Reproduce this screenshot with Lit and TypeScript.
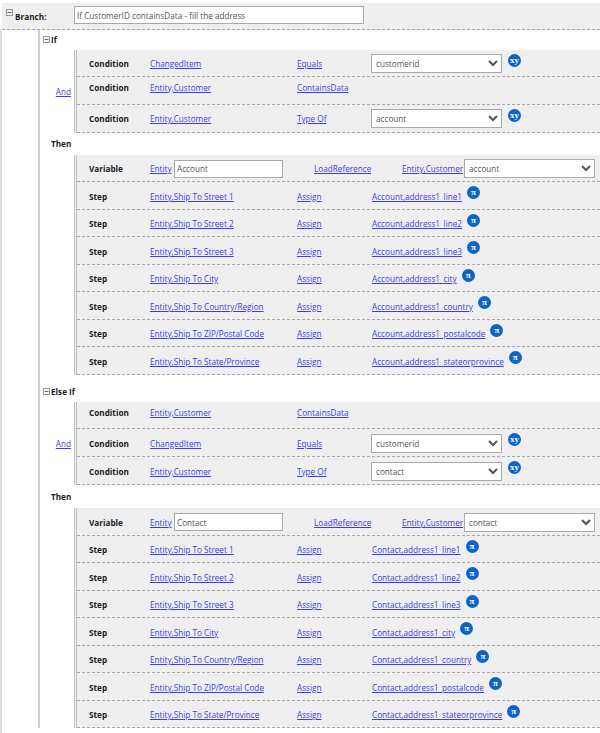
import { LitElement, html, css } from "lit";
import { customElement } from "lit/decorators.js";

type Row = { label: string; a: string; b: string; c?: string; sel?: string; icon?: "xy" | "pi"; h: number };

const steps = (t: string): Row[] => [
  ["Ship To Street 1", "address1_line1"],
  ["Ship To Street 2", "address1_line2"],
  ["Ship To Street 3", "address1_line3"],
  ["Ship To City", "address1_city"],
  ["Ship To Country/Region", "address1_country"],
  ["Ship To ZIP/Postal Code", "address1_postalcode"],
  ["Ship To State/Province", "address1_stateorprovince"],
].map(([a, c]) => ({ label: "Step", a: `Entity,${a}`, b: "Assign", c: `${t},${c}`, icon: "pi" as const, h: 27.5 }));

const cond1 = (h: number): Row => ({ label: "Condition", a: "ChangedItem", b: "Equals", sel: "customerid", icon: "xy", h });
const cond2 = (h: number): Row => ({ label: "Condition", a: "Entity,Customer", b: "ContainsData", h });
const cond3 = (h: number, s: string): Row => ({ label: "Condition", a: "Entity,Customer", b: "Type Of", sel: s, icon: "xy", h });

@customElement("app-root")
export class AppRoot extends LitElement {
  static styles = css`
    :host {
      display: block;
      height: 733px;
      overflow: hidden;
      background: #fff;
      font-family: "Open Sans", "Noto Sans", sans-serif;
      font-size: 8.2px;
      line-height: 13px;
      color: #333;
    }
    a { color: #3b3bf0; text-decoration: underline; white-space: nowrap; }
    b { color: #1c1c1c; font-weight: 700; }
    .branch {
      margin-top: 3px;
      height: 27px;
      box-sizing: border-box;
      margin-left: 2px;
      background: #efefef;
      border-bottom: 1px dashed #a8a8a8;
      display: flex;
      align-items: center;
      padding-left: 4px;
      gap: 2px;
    }
    .branch b { width: 57px; padding-top: 1px; }
    .branch .exp { align-self: flex-start; margin-top: 6px; }
    .exp { flex: none; width: 7px; height: 7px; display: block; }
    .text {
      box-sizing: border-box;
      border: 1px solid #a9a9a9;
      background: #fff;
      padding: 0 2px;
      font: inherit;
      color: #555;
      outline: none;
      height: 18px;
    }
    .branch .text { width: 290px; margin-top: -2px; }
    .rail0 { border-left: 2px solid #dcdcdc; padding-left: 36px; padding-bottom: 40px; }
    .rail1 { border-left: 2px solid #d0d0d0; padding-left: 3px; }
    .head { height: 20px; box-sizing: border-box; padding-bottom: 1px; display: flex; align-items: center; }
    .head .exp { margin-right: 1px; }
    .group { display: flex; align-items: center; }
    .and { width: 31px; text-align: right; padding-right: 3px; box-sizing: border-box; flex: none; }
    .then { display: flex; align-items: center; padding-left: 8px; }
    .box {
      flex: 1;
      min-width: 0;
      background: #efefef;
      border-left: 3px double #bdbdbd;
    }
    .indented { margin-left: 31px; }
    .row {
      box-sizing: border-box;
      border-bottom: 1px dashed #a8a8a8;
      padding-left: 12px;
      display: grid;
      grid-template-columns: 61px 147px 75px auto;
      align-items: center;
      padding-top: 1px;
    }
    .row.plain { align-items: start; padding-top: 4px; }
    .row.step { padding-top: 2px; }
    .end { display: flex; align-items: center; align-self: stretch; }
    .sel {
      width: 131px;
      height: 19px;
      box-sizing: border-box;
      border: 1px solid #a9a9a9;
      background-color: #fff;
      font: inherit;
      color: #555;
      padding: 0;
      border-radius: 0;
      outline: none;
    }
    .end .sel { margin: 0 0 0 -1px; }
    .badge {
      flex: none;
      width: 13px;
      height: 13px;
      border-radius: 50%;
      background: #0b64c8;
      color: #fff;
      font-family: "Liberation Serif", serif;
      font-size: 9px;
      font-weight: 700;
      line-height: 12px;
      text-align: center;
      align-self: flex-start;
    }
    .xy { margin: 3px 0 0 6px; }
    .pi { margin: 2px 0 0 5px; }
    .var {
      box-sizing: border-box;
      border-bottom: 1px dashed #a8a8a8;
      padding: 2px 0 0 12px;
      display: grid;
      grid-template-columns: 61px 24px 109px 31px 88px 62px 131px;
      align-items: center;
    }
    .var .text { grid-column: 3; }
    .var .load { grid-column: 5; }
    .after { height: 7px; }
  `;

  private exp() {
    return html`<svg class="exp" viewBox="0 0 7 7"><rect x=".5" y=".5" width="6" height="6" fill="#f4f4f4" stroke="#999"/><path d="M1.5 3.5h4" stroke="#666"/></svg>`;
  }

  private row(r: Row) {
    const cls = r.c ? "step" : r.sel ? "" : "plain";
    return html`<div class="row ${cls}" style="height:${r.h}px">
      <b>${r.label}</b><span><a href="#">${r.a}</a></span><span><a href="#">${r.b}</a></span>
      <div class="end">
        ${r.sel
          ? html`<select class="sel"><option>${r.sel}</option></select>`
          : r.c
            ? html`<a href="#">${r.c}</a>`
            : ""}
        ${r.icon === "xy" ? html`<span class="badge xy">xy</span>` : r.icon === "pi" ? html`<span class="badge pi">π</span>` : ""}
      </div>
    </div>`;
  }

  private block(title: string, conds: Row[], tbl: string, val: string, after: number) {
    return html`
      <div class="head">${this.exp()}<b>${title}</b></div>
      <div class="group">
        <a class="and" href="#">And</a>
        <div class="box">${conds.map((c) => this.row(c))}</div>
      </div>
      <div class="then" style="height:${after}px"><b>Then</b></div>
      <div class="indented"><div class="box">
        <div class="var" style="height:27.5px">
          <b>Variable</b><a href="#">Entity</a>
          <input class="text" .value=${tbl} />
          <a class="load" href="#">LoadReference</a>
          <a href="#">Entity,Customer</a>
          <select class="sel"><option>${val}</option></select>
        </div>
        ${steps(tbl).map((s) => this.row(s))}
      </div></div>
    `;
  }

  render() {
    return html`
      <div class="branch">${this.exp()}<b>Branch:</b><input class="text" .value=${"If CustomerID containsData - fill the address"} /></div>
      <div class="rail0"><div class="rail1">
        ${this.block("If", [cond1(26.5), cond2(28), cond3(28, "account")], "Account", "account", 22)}
        <div class="after"></div>
        ${this.block("Else If", [cond2(27.5), cond1(28), cond3(28, "contact")], "Contact", "contact", 23)}
      </div></div>
    `;
  }
}
